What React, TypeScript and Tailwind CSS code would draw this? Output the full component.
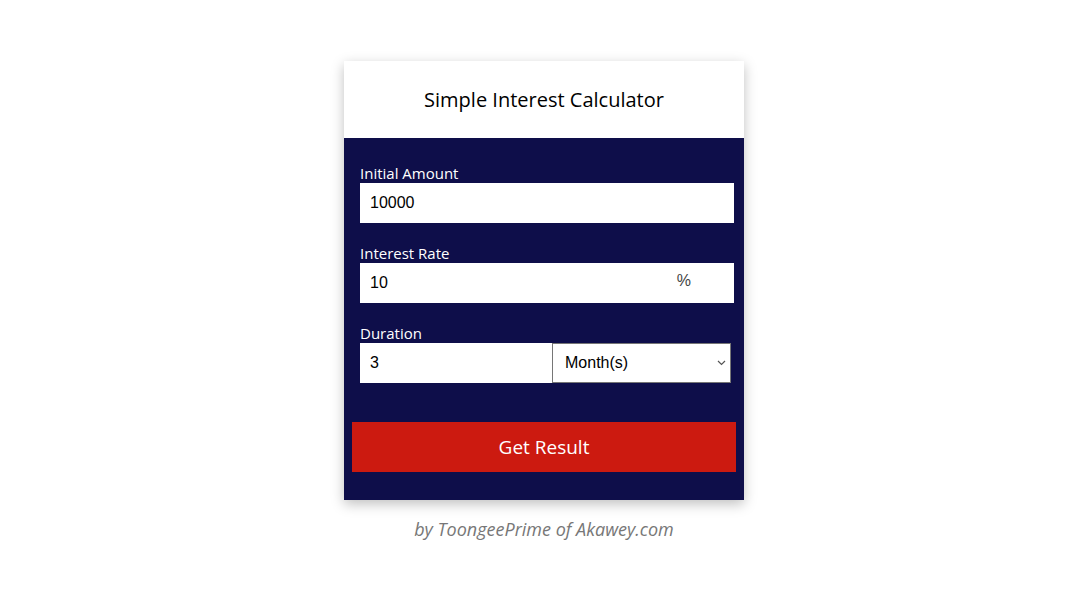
import { useState } from "react";

export default function App() {
  const [amount, setAmount] = useState("10000");
  const [rate, setRate] = useState("10");
  const [duration, setDuration] = useState("3");
  const [unit, setUnit] = useState("months");

  return (
    <div className="min-h-screen bg-white flex flex-col items-center pt-[61px] pl-4 font-['Open_Sans',sans-serif]">
      <div className="w-[400px] shadow-[0_4px_12px_rgba(0,0,0,0.25)]">
        <div className="h-[77px] bg-white flex items-center justify-center">
          <h1 className="text-[20px] text-black">Simple Interest Calculator</h1>
        </div>

        <div className="bg-[#0e0e4a] px-2 pt-[25px] pb-[28px]">
          <div className="pl-2 pr-[2px]">
            <label className="block text-[15px] leading-[20px] text-white">Initial Amount</label>
            <input
              value={amount}
              onChange={(e) => setAmount(e.target.value)}
              className="w-full h-10 bg-white px-[10px] text-[16px] text-black outline-none font-['Liberation_Sans',Arial,sans-serif]"
            />

            <label className="block mt-5 text-[15px] leading-[20px] text-white">Interest Rate</label>
            <div className="relative">
              <input
                value={rate}
                onChange={(e) => setRate(e.target.value)}
                className="w-full h-10 bg-white px-[10px] text-[16px] text-black outline-none font-['Liberation_Sans',Arial,sans-serif]"
              />
              <span className="absolute right-[43px] top-[6px] text-[16px] text-[#444] font-['Liberation_Sans',Arial,sans-serif]">%</span>
            </div>

            <label className="block mt-5 text-[15px] leading-[20px] text-white">Duration</label>
            <div className="flex">
              <input
                value={duration}
                onChange={(e) => setDuration(e.target.value)}
                className="w-[192px] h-10 bg-white px-[10px] text-[16px] text-black outline-none font-['Liberation_Sans',Arial,sans-serif]"
              />
              <div className="relative w-[179px]">
                <select
                  value={unit}
                  onChange={(e) => setUnit(e.target.value)}
                  className="appearance-none w-full h-10 bg-white border border-[#767676] pl-3 text-[16px] text-black outline-none font-['Liberation_Sans',Arial,sans-serif]"
                >
                  <option value="days">Day(s)</option>
                  <option value="months">Month(s)</option>
                  <option value="years">Year(s)</option>
                </select>
                <svg
                  className="absolute right-[5px] top-[17px] pointer-events-none"
                  width="9"
                  height="6"
                  viewBox="0 0 9 6"
                  fill="none"
                >
                  <path d="M1 1l3.5 3.5L8 1" stroke="#555" strokeWidth="1.2" />
                </svg>
              </div>
            </div>
          </div>

          <button className="mt-[39px] w-full h-[50px] bg-[#cc1a10] text-white text-[19px]">
            Get Result
          </button>
        </div>
      </div>

      <p className="mt-[16px] text-[18px] italic text-[#777]">by ToongeePrime of Akawey.com</p>
    </div>
  );
}
